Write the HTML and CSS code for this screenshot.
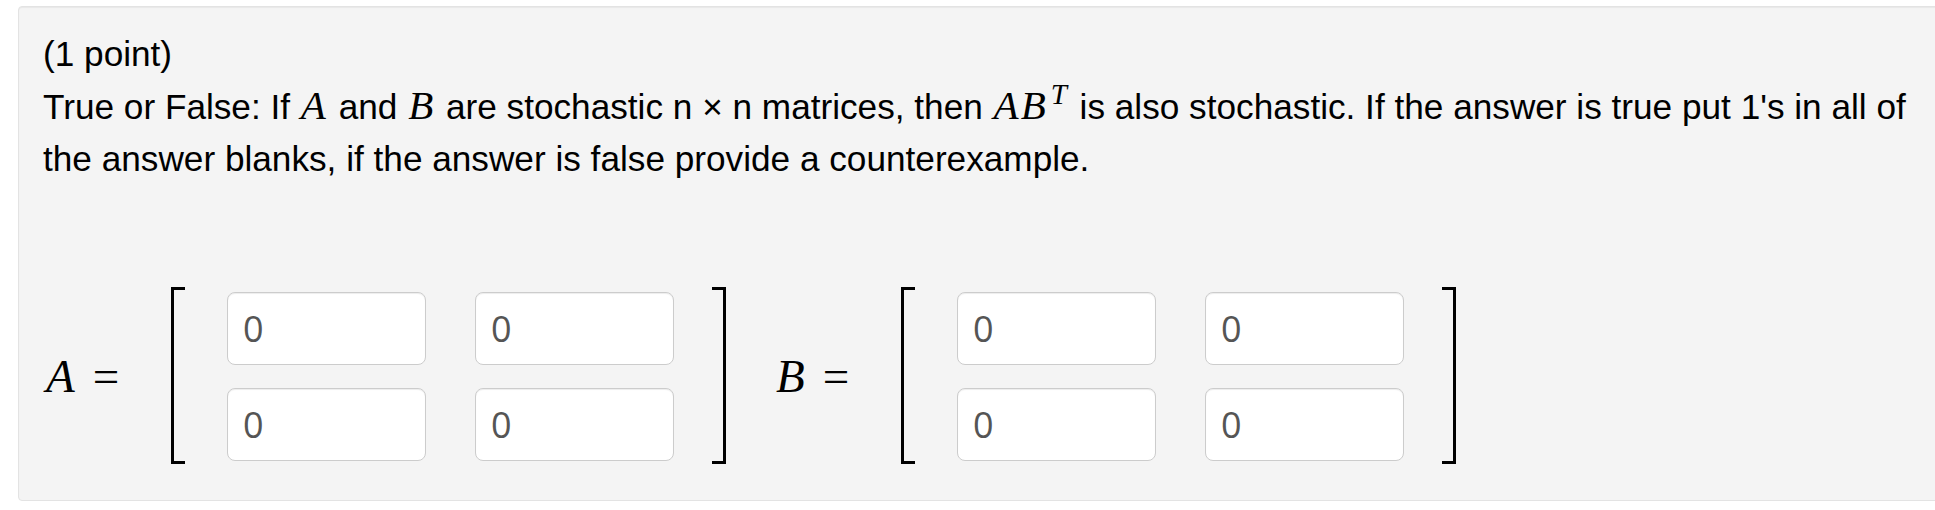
FILE: index.html
```html
<!DOCTYPE html>
<html>
<head>
<meta charset="utf-8">
<link rel="stylesheet" href="styles.css">
</head>
<body>
<div class="problem">
  <p class="text">(1 point)<br>True or False: If <span class="m">A</span> and <span class="m">B</span> are stochastic n × n matrices, then <span class="m">AB<sup>T</sup></span> is also stochastic. If the answer is true put 1's in all of the answer blanks, if the answer is false provide a counterexample.</p>
  <div class="eqs">
    <span class="lbl"><i>A</i><span class="eqsign">=</span></span>
    <div class="matrix">
      <div class="cells">
        <input class="cell" type="text" value="0">
        <input class="cell" type="text" value="0">
        <input class="cell" type="text" value="0">
        <input class="cell" type="text" value="0">
      </div>
    </div>
    <span class="lbl"><i>B</i><span class="eqsign">=</span></span>
    <div class="matrix">
      <div class="cells">
        <input class="cell" type="text" value="0">
        <input class="cell" type="text" value="0">
        <input class="cell" type="text" value="0">
        <input class="cell" type="text" value="0">
      </div>
    </div>
  </div>
</div>
</body>
</html>
```
FILE: styles.css
```css
html, body {
  margin: 0;
  padding: 0;
  background: #ffffff;
  overflow: hidden;
}
body {
  font-family: "Liberation Sans", Arial, sans-serif;
  color: #000;
}
.problem {
  margin: 6px 0 0 18px;
  width: 1940px;
  height: 495px;
  box-sizing: border-box;
  background: #f4f4f4;
  border: 1px solid #e3e3e3;
  border-radius: 4px;
  box-shadow: inset 0 1px 1px rgba(0, 0, 0, 0.05);
  padding: 21px 24px;
}
.text {
  margin: 0;
  font-size: 35.2px;
  line-height: 52px;
  max-width: 1885px;
}
.m {
  font-family: "Liberation Serif", "Times New Roman", serif;
  font-style: italic;
  font-size: 41px;
  line-height: 1;
  letter-spacing: 2px;
  margin: 0 1px;
}
.m sup {
  font-size: 29px;
  line-height: 1;
  vertical-align: 15px;
  margin-left: 3px;
}
.eqs {
  display: flex;
  align-items: center;
  margin-top: 102px;
}
.lbl {
  display: flex;
  align-items: center;
  width: 128px;
  box-sizing: border-box;
  padding-left: 3px;
  font-family: "Liberation Serif", "Times New Roman", serif;
  font-size: 47px;
}
.lbl i {
  font-style: italic;
}
.eqsign {
  margin-left: 18px;
}
.matrix + .lbl {
  margin-left: 47px;
}
.matrix {
  display: flex;
}
.matrix::before,
.matrix::after {
  content: "";
  width: 11px;
  border: 3px solid #000;
}
.matrix::before {
  border-right: none;
}
.matrix::after {
  border-left: none;
}
.cells {
  display: grid;
  grid-template-columns: 199px 199px;
  grid-template-rows: 73px 73px;
  column-gap: 49px;
  row-gap: 23px;
  padding: 5px 0 3px;
  margin: 0 38px 0 42px;
}
.cell {
  width: 199px;
  height: 73px;
  box-sizing: border-box;
  margin: 0;
  border: 1px solid #cccccc;
  border-radius: 8px;
  background: #fff;
  box-shadow: inset 0 1px 1px rgba(0, 0, 0, 0.075);
  padding: 0 15px;
  font-family: "Open Sans", "Liberation Sans", sans-serif;
  font-size: 36px;
  color: #555;
  outline: none;
}
```
